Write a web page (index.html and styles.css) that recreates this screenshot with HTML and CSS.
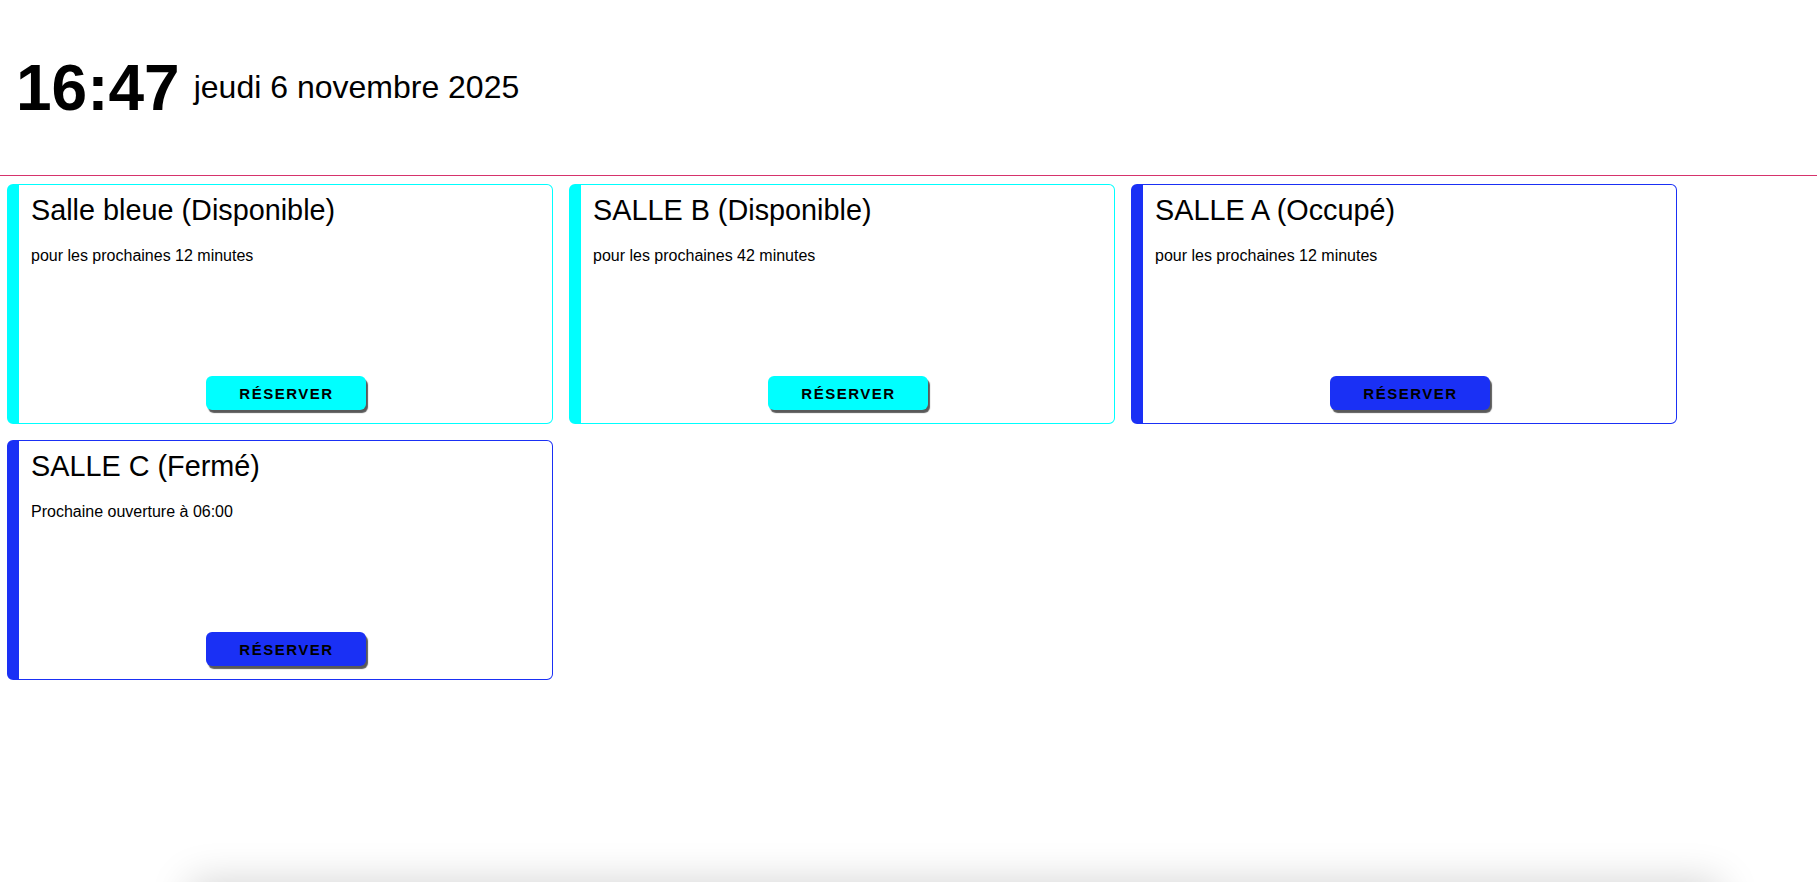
FILE: index.html
```html
<!DOCTYPE html>
<html lang="fr">
<head>
    <meta charset="UTF-8">
    <meta name="viewport" content="width=device-width, initial-scale=1.0">
    <title>Salles</title>
    <link rel="stylesheet" href="styles.css">
</head>
<body>
    <header class="header">
        <span class="clock">16:47</span>
        <span class="date">jeudi 6 novembre 2025</span>
    </header>

    <div class="rooms">
        <div class="room free">
            <h2 class="room-title">Salle bleue (Disponible)</h2>
            <p class="room-info">pour les prochaines 12 minutes</p>
            <button class="book">RÉSERVER</button>
        </div>
        <div class="room free">
            <h2 class="room-title">SALLE B (Disponible)</h2>
            <p class="room-info">pour les prochaines 42 minutes</p>
            <button class="book">RÉSERVER</button>
        </div>
        <div class="room busy">
            <h2 class="room-title">SALLE A (Occupé)</h2>
            <p class="room-info">pour les prochaines 12 minutes</p>
            <button class="book">RÉSERVER</button>
        </div>
        <div class="room busy">
            <h2 class="room-title">SALLE C (Fermé)</h2>
            <p class="room-info">Prochaine ouverture à 06:00</p>
            <button class="book">RÉSERVER</button>
        </div>
    </div>

    <div class="drawer"></div>
</body>
</html>
```

FILE: styles.css
```css
body {
    font-family: 'Liberation Sans', Helvetica, Arial, sans-serif;
    margin: 0;
    background-color: #FFFFFF;
    color: #000000;
    overflow: hidden;
}
.header {
    display: flex;
    align-items: center;
    gap: 14px;
    height: 175px;
    padding: 0 16px;
    border-bottom: 1px solid #D6336C;
}
.clock {
    font-size: 64px;
    font-weight: bold;
}
.date {
    font-size: 32px;
}
.rooms {
    display: flex;
    flex-wrap: wrap;
    gap: 16px;
    padding: 8px 7px;
}
.room {
    box-sizing: border-box;
    width: 546px;
    height: 240px;
    display: flex;
    flex-direction: column;
    padding: 9px 12px 13px 12px;
    border: 1px solid;
    border-left-width: 12px;
    border-radius: 6px;
}
.room-title {
    font-size: 28.8px;
    font-weight: normal;
    margin: 0;
}
.room-info {
    font-size: 16px;
    margin: 20px 0 0 0;
}
.book {
    margin-top: auto;
    align-self: center;
    width: 160px;
    height: 34px;
    border: none;
    border-radius: 6px;
    box-shadow: 2px 3px 1px rgba(0,0,0,0.65);
    font-family: inherit;
    font-size: 15px;
    font-weight: bold;
    letter-spacing: 1.5px;
    padding: 0 0 0 2px;
    color: #000000;
    cursor: pointer;
}
.free {
    border-color: #00FFFF;
}
.free .book {
    background-color: #00FFFF;
}
.busy {
    border-color: #1A30F5;
}
.busy .book {
    background-color: #1A30F5;
}
/* panneau caché sous l'écran, seule l'ombre dépasse */
.drawer {
    position: fixed;
    left: 190px;
    width: 1530px;
    bottom: -120px;
    height: 120px;
    background: #FFFFFF;
    box-shadow: 0 0 40px rgba(0,0,0,0.18);
}
```
